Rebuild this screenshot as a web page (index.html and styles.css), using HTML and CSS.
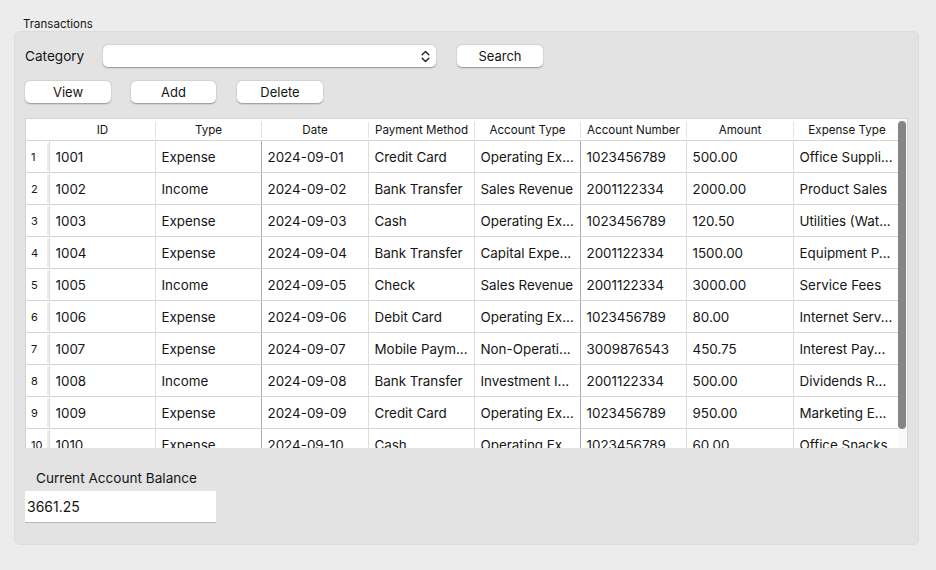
FILE: index.html
```html
<!DOCTYPE html>
<html>
<head>
<meta charset="utf-8">
<link rel="stylesheet" href="styles.css">
</head>
<body>
<div class="window">
  <div class="group-title">Transactions</div>
  <div class="group">
    <div class="row search-row">
      <span class="label">Category</span>
      <div class="combo">
        <svg class="chev" width="9" height="13" viewBox="0 0 9 13"><path d="M1.2 4.8 L4.5 1.6 L7.8 4.8 M1.2 8.2 L4.5 11.4 L7.8 8.2" fill="none" stroke="#222" stroke-width="1.4" stroke-linecap="round" stroke-linejoin="round"/></svg>
      </div>
      <button class="btn btn-search">Search</button>
    </div>
    <div class="row action-row">
      <button class="btn btn-view">View</button>
      <button class="btn btn-add">Add</button>
      <button class="btn btn-delete">Delete</button>
    </div>
    <div class="table-frame">
      <div class="table-clip">
        <table class="grid">
          <colgroup>
            <col class="c-num"><col class="c-a"><col class="c-a"><col class="c-b"><col class="c-a"><col class="c-a"><col class="c-a"><col class="c-b"><col class="c-b">
          </colgroup>
          <thead>
            <tr>
              <th class="corner"></th>
              <th><div class="hd first">ID</div></th>
              <th><div class="hd">Type</div></th>
              <th><div class="hd">Date</div></th>
              <th><div class="hd">Payment Method</div></th>
              <th><div class="hd">Account Type</div></th>
              <th><div class="hd">Account Number</div></th>
              <th><div class="hd">Amount</div></th>
              <th><div class="hd">Expense Type</div></th>
            </tr>
          </thead>
          <tbody>
            <tr><td class="num"><div class="numin">1</div></td><td>1001</td><td class="dk">Expense</td><td>2024-09-01</td><td>Credit Card</td><td>Operating Ex...</td><td class="dkl">1023456789</td><td>500.00</td><td>Office Suppli...</td></tr>
            <tr><td class="num"><div class="numin">2</div></td><td>1002</td><td class="dk">Income</td><td>2024-09-02</td><td>Bank Transfer</td><td>Sales Revenue</td><td class="dkl">2001122334</td><td>2000.00</td><td>Product Sales</td></tr>
            <tr><td class="num"><div class="numin">3</div></td><td>1003</td><td class="dk">Expense</td><td>2024-09-03</td><td>Cash</td><td>Operating Ex...</td><td class="dkl">1023456789</td><td>120.50</td><td>Utilities (Wat...</td></tr>
            <tr><td class="num"><div class="numin">4</div></td><td>1004</td><td class="dk">Expense</td><td>2024-09-04</td><td>Bank Transfer</td><td>Capital Expe...</td><td class="dkl">2001122334</td><td>1500.00</td><td>Equipment P...</td></tr>
            <tr><td class="num"><div class="numin">5</div></td><td>1005</td><td class="dk">Income</td><td>2024-09-05</td><td>Check</td><td>Sales Revenue</td><td class="dkl">2001122334</td><td>3000.00</td><td>Service Fees</td></tr>
            <tr><td class="num"><div class="numin">6</div></td><td>1006</td><td class="dk">Expense</td><td>2024-09-06</td><td>Debit Card</td><td>Operating Ex...</td><td class="dkl">1023456789</td><td>80.00</td><td>Internet Serv...</td></tr>
            <tr><td class="num"><div class="numin">7</div></td><td>1007</td><td class="dk">Expense</td><td>2024-09-07</td><td>Mobile Paym...</td><td>Non-Operati...</td><td class="dkl">3009876543</td><td>450.75</td><td>Interest Pay...</td></tr>
            <tr><td class="num"><div class="numin">8</div></td><td>1008</td><td class="dk">Income</td><td>2024-09-08</td><td>Bank Transfer</td><td>Investment I...</td><td class="dkl">2001122334</td><td>500.00</td><td>Dividends R...</td></tr>
            <tr><td class="num"><div class="numin">9</div></td><td>1009</td><td class="dk">Expense</td><td>2024-09-09</td><td>Credit Card</td><td>Operating Ex...</td><td class="dkl">1023456789</td><td>950.00</td><td>Marketing E...</td></tr>
            <tr><td class="num"><div class="numin">10</div></td><td>1010</td><td class="dk">Expense</td><td>2024-09-10</td><td>Cash</td><td>Operating Ex...</td><td class="dkl">1023456789</td><td>60.00</td><td>Office Snacks</td></tr>
          </tbody>
        </table>
      </div>
      <div class="scroll-track"><div class="scroll-thumb"></div></div>
    </div>
    <div class="balance-label">Current Account Balance</div>
    <div class="balance-input">3661.25</div>
  </div>
</div>
</body>
</html>
```

FILE: styles.css
```css
html, body {
  margin: 0;
  padding: 0;
  background: #ececec;
  width: 936px;
  height: 570px;
  overflow: hidden;
  font-family: "Inter", "Liberation Sans", sans-serif;
  color: #151515;
}

.window {
  padding: 17px 17px 0 14px;
}

.group-title {
  font-size: 11.5px;
  line-height: 14px;
  padding-left: 9px;
  height: 14px;
}

.group {
  background: #e3e3e3;
  border: 1px solid #dcdcdc;
  border-radius: 6px;
  height: 514px;
  box-sizing: border-box;
  padding: 13px 0 0 10px;
}

.row {
  display: flex;
  align-items: center;
}

.search-row {
  height: 22px;
}

.label {
  font-size: 13.6px;
  width: 78px;
}

.combo {
  width: 333px;
  height: 22px;
  background: #fff;
  border-radius: 5px;
  box-shadow: 0 0.5px 1.5px rgba(0,0,0,0.35);
  display: flex;
  align-items: center;
  justify-content: flex-end;
  box-sizing: border-box;
  padding-right: 6px;
}

.btn {
  font-family: inherit;
  font-size: 13px;
  color: #151515;
  background: #fff;
  border: none;
  border-radius: 5px;
  box-shadow: 0 0.5px 1.5px rgba(0,0,0,0.35);
  height: 22px;
  padding: 0;
  width: 86px;
}

.btn-search {
  margin-left: 21px;
}

.action-row {
  margin-top: 14px;
  height: 22px;
}

.btn-add {
  margin-left: 20px;
  width: 85px;
}

.btn-delete {
  margin-left: 21px;
}

.table-frame {
  margin-top: 15px;
  width: 883px;
  height: 330px;
  box-sizing: border-box;
  border: 1px solid #d3d3d3;
  border-bottom: none;
  background: #fff;
  display: flex;
  overflow: hidden;
}

.table-clip {
  width: 874px;
  overflow: hidden;
}

.grid {
  border-collapse: collapse;
  table-layout: fixed;
  width: 874px;
}

.c-num { width: 23px; }
.c-a { width: 106px; }
.c-b { width: 107px; }

.grid th {
  height: 21px;
  padding: 0;
  font-weight: normal;
  font-size: 11.6px;
  border-bottom: 1px solid #d6d6d6;
}

.hd {
  border-left: 1px solid #e2e2e2;
  height: 16px;
  line-height: 16px;
  text-align: center;
}

.hd.first {
  border-left-color: transparent;
}

.grid td {
  height: 31px;
  padding: 0 0 0 6px;
  font-size: 13.4px;
  white-space: nowrap;
  overflow: hidden;
  border-bottom: 1px solid #d6d6d6;
  border-left: 1px solid #dedede;
}

.grid td.num {
  padding: 0;
  border-left: none;
  font-size: 11px;
}

.numin {
  height: 28px;
  line-height: 28px;
  padding-left: 5px;
  border-right: 2px solid #ececec;
}

.grid td.dk + td {
  border-left-color: #acacac;
}

.grid td.dkl {
  border-left-color: #acacac;
}

.scroll-track {
  width: 9px;
  background: #fafafa;
  padding-top: 2px;
}

.scroll-thumb {
  width: 8px;
  height: 308px;
  background: #858585;
  border-radius: 4px;
}

.balance-label {
  margin-top: 22px;
  padding-left: 11px;
  font-size: 13.6px;
  line-height: 17px;
}

.balance-input {
  margin-top: 4px;
  width: 191px;
  height: 32px;
  box-sizing: border-box;
  background: #fff;
  border-bottom: 1px solid #b8b8b8;
  font-size: 14px;
  line-height: 31px;
  padding-left: 2px;
}
```
